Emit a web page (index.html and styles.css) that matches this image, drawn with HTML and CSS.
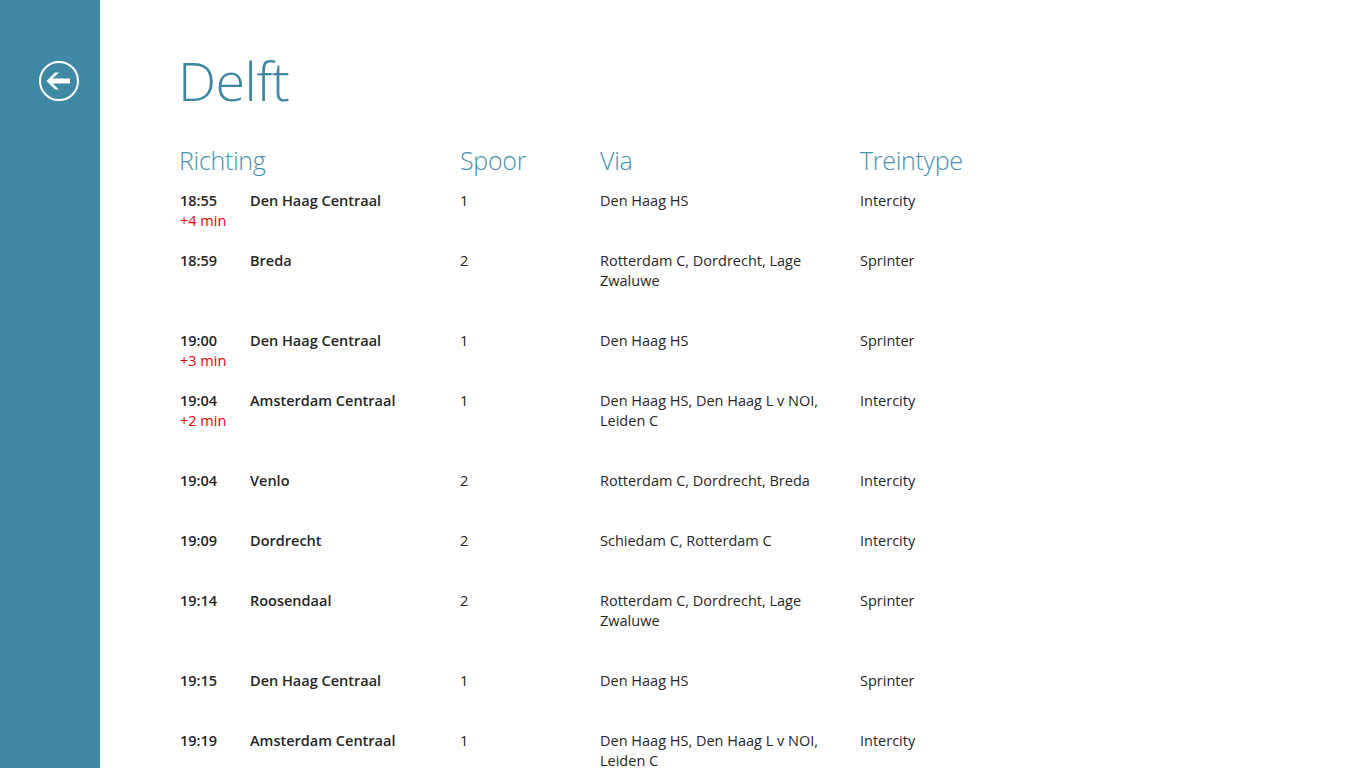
FILE: index.html
```html
<!DOCTYPE html>
<html lang="nl">
<head>
<meta charset="utf-8">
<title>Delft</title>
<link rel="stylesheet" href="styles.css">
</head>
<body>
<div class="app">
  <aside class="sidebar">
    <button class="back" aria-label="Terug">
      <svg width="42" height="42" viewBox="0 0 42 42">
        <circle cx="21" cy="21" r="19" fill="none" stroke="#fff" stroke-width="2"/>
        <path d="M8.5 21 L17 12.5 L21 12.5 L14.5 18.5 L32 18.5 L32 23.5 L14.5 23.5 L21 29.5 L17 29.5 Z" fill="#fff"/>
      </svg>
    </button>
  </aside>
  <main class="content">
    <h1 class="title">Delft</h1>
    <div class="table">
      <div class="row head">
        <div class="c-richting">Richting</div>
        <div class="c-spoor">Spoor</div>
        <div class="c-via">Via</div>
        <div class="c-type">Treintype</div>
      </div>

      <div class="row">
        <div class="c-time"><b>18:55</b><span class="delay">+4 min</span></div>
        <div class="c-dest">Den Haag Centraal</div>
        <div class="c-spoor">1</div>
        <div class="c-via">Den Haag HS</div>
        <div class="c-type">Intercity</div>
      </div>
      <div class="row">
        <div class="c-time"><b>18:59</b></div>
        <div class="c-dest">Breda</div>
        <div class="c-spoor">2</div>
        <div class="c-via">Rotterdam C, Dordrecht, Lage Zwaluwe</div>
        <div class="c-type">Sprinter</div>
      </div>
      <div class="row">
        <div class="c-time"><b>19:00</b><span class="delay">+3 min</span></div>
        <div class="c-dest">Den Haag Centraal</div>
        <div class="c-spoor">1</div>
        <div class="c-via">Den Haag HS</div>
        <div class="c-type">Sprinter</div>
      </div>
      <div class="row">
        <div class="c-time"><b>19:04</b><span class="delay">+2 min</span></div>
        <div class="c-dest">Amsterdam Centraal</div>
        <div class="c-spoor">1</div>
        <div class="c-via">Den Haag HS, Den Haag L v NOI, Leiden C</div>
        <div class="c-type">Intercity</div>
      </div>
      <div class="row">
        <div class="c-time"><b>19:04</b></div>
        <div class="c-dest">Venlo</div>
        <div class="c-spoor">2</div>
        <div class="c-via">Rotterdam C, Dordrecht, Breda</div>
        <div class="c-type">Intercity</div>
      </div>
      <div class="row">
        <div class="c-time"><b>19:09</b></div>
        <div class="c-dest">Dordrecht</div>
        <div class="c-spoor">2</div>
        <div class="c-via">Schiedam C, Rotterdam C</div>
        <div class="c-type">Intercity</div>
      </div>
      <div class="row">
        <div class="c-time"><b>19:14</b></div>
        <div class="c-dest">Roosendaal</div>
        <div class="c-spoor">2</div>
        <div class="c-via">Rotterdam C, Dordrecht, Lage Zwaluwe</div>
        <div class="c-type">Sprinter</div>
      </div>
      <div class="row">
        <div class="c-time"><b>19:15</b></div>
        <div class="c-dest">Den Haag Centraal</div>
        <div class="c-spoor">1</div>
        <div class="c-via">Den Haag HS</div>
        <div class="c-type">Sprinter</div>
      </div>
      <div class="row">
        <div class="c-time"><b>19:19</b></div>
        <div class="c-dest">Amsterdam Centraal</div>
        <div class="c-spoor">1</div>
        <div class="c-via">Den Haag HS, Den Haag L v NOI, Leiden C</div>
        <div class="c-type">Intercity</div>
      </div>
    </div>
  </main>
</div>
</body>
</html>
```

FILE: styles.css
```css
html, body {
  margin: 0;
  padding: 0;
  height: 100%;
  overflow: hidden;
  background: #fff;
}
body {
  font-family: "Open Sans", "Noto Sans", sans-serif;
  color: #262626;
}
.app {
  display: flex;
  height: 768px;
}
.sidebar {
  width: 100px;
  flex: none;
  background: #3f89a7;
  display: flex;
  justify-content: center;
  align-items: flex-start;
  padding-top: 60px;
  box-sizing: border-box;
}
.back {
  background: none;
  border: 0;
  padding: 0;
  margin-left: 17px;
  width: 42px;
  height: 42px;
  cursor: pointer;
  display: block;
}
.back svg { display: block; }
.content {
  flex: 1;
  padding-left: 78px;
  padding-top: 44px;
}
.title {
  margin: 0;
  font-weight: 300;
  font-size: 54px;
  line-height: 72px;
  color: #3e86a4;
  letter-spacing: -0.6px;
}
.table {
  margin-top: 29px;
}
.row {
  display: grid;
  grid-template-columns: 72px 210px 140px 260px 200px;
  align-items: start;
  font-size: 14.5px;
  line-height: 20px;
}
.row.head {
  grid-template-columns: 282px 140px 260px 200px;
  font-weight: 300;
  font-size: 25px;
  line-height: 30px;
  color: #4a90ad;
  letter-spacing: -0.3px;
  margin-bottom: 16px;
}
.c-richting { padding-left: 1px; }
.c-time { display: flex; flex-direction: column; padding-left: 2px; }
.c-time b { font-weight: 600; }
.delay { color: #e60000; }
.c-dest { font-weight: 600; }
.c-via {
  padding-bottom: 40px;
  padding-right: 30px;
}
.row.head .c-via { padding: 0; }
```
